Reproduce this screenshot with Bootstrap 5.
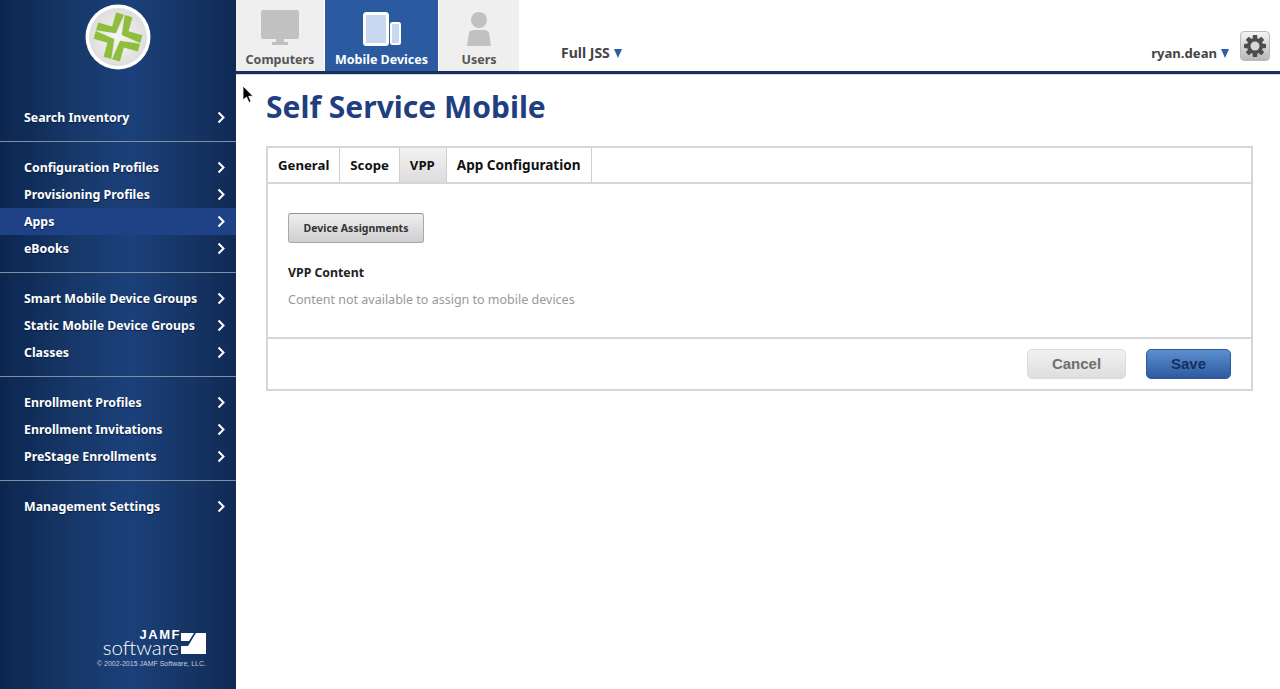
<!DOCTYPE html>
<html lang="en"><head><meta charset="utf-8"><title>Self Service Mobile</title>
<link href="https://cdn.jsdelivr.net/npm/bootstrap@5.3.0/dist/css/bootstrap.min.css" rel="stylesheet">
<style>
html,body{height:100%;overflow:hidden}
body{font-family:"Noto Sans","Open Sans",sans-serif;background:#fff;color:#222}
.shell{height:689px;position:relative}
.side{width:236px;flex:none;background:linear-gradient(90deg,#0c2650 0%,#163767 30%,#1b407a 55%,#163565 80%,#0f2a55 100%)}
.logo-wrap{height:92px;padding:4px 0 0 85px}
.logo-disc{width:66px;height:66px;display:block}
.side-group{padding:12px 0 10px;border-bottom:1px solid #7f8fa8}
.side-group.last{border-bottom:0}
.side-link{height:27px;padding:2px 11px 0 24px;color:#fff;font-weight:700;font-size:12.35px;text-decoration:none;text-shadow:0 1px 1px #0a1d3d}
.side-link:hover{color:#fff}
.side-link.on{background:#1f4286}
.chev{width:8px;height:13px;display:block;margin-top:-2px}
.side-foot{margin-top:auto;padding:0 30px 21px 0;color:#c4cfdf;text-align:right}
.brand-words{text-align:right;color:#fff;margin-right:2px}
.brand-jamf{font:700 13px/11px "Liberation Sans",sans-serif;letter-spacing:1.5px;display:block;margin-right:-2px}
.brand-soft{font:300 20.5px/14px Lato,"Liberation Sans",sans-serif;display:block}
.copy{font:400 7px/9px "Liberation Sans",sans-serif;margin:5px 0 0}
.top{height:74px;border-bottom:3px solid #1b2f5b;box-shadow:0 1px 0 #c9d6e8}
.mod{height:71px;background:#efefef;color:#555;font-weight:700;font-size:12.5px;text-decoration:none;padding-top:10px;margin-right:1px}
.mod:hover{color:#555}
.mod svg{display:block;margin-bottom:5px}
.mod.on{background:#2c5aa0;color:#fff}
.mod.on:hover{color:#fff}
.m1{width:88px}.m2{width:113px}.m3{width:80px}
.drop{font-weight:700;font-size:13.1px;color:#444;padding-top:44px;line-height:18px}
.tri{display:inline-block;width:0;height:0;border-left:4.5px solid transparent;border-right:4.5px solid transparent;border-top:9px solid #2d5fa3;margin-left:4px}
.scope{margin-left:41px;font-size:14px}
.who{margin-left:auto;margin-right:11px}
.gear{width:30px;height:30px;margin:31px 10px 0 0;background:linear-gradient(#f4f4f4,#b9b9b9);border:1px solid #bbb;border-radius:4px;align-self:flex-start;display:flex;align-items:center;justify-content:center}
.page-title{font-size:30px;font-weight:700;color:#1f3f80;margin:0;padding:15px 0 21px 30px;line-height:36px}
.panel-box{margin:0 27px 0 30px;border:2px solid #d6d6d6}
.tab-bar{height:36px;border-bottom:2px solid #d6d6d6}
.tab-item{font-weight:700;font-size:13.2px;color:#111;padding:0 10px;border-right:1px solid #cfcfcf;line-height:34px;text-decoration:none}
.tab-item:hover{color:#111}
.tab-item.on{background:linear-gradient(#f3f3f3,#dcdcdc);padding-right:11px}
.tab-item.wide{font-size:13.55px}
.panel-body{height:155px;padding:29px 20px 0;border-bottom:2px solid #d6d6d6}
.assign{width:136px;height:30px;background:linear-gradient(#eee,#cfcfcf);border:1px solid #a8a8a8;border-top-color:#8f8f8f;border-radius:3px;font-size:10.5px;font-weight:700;color:#333;padding:1px 0 0}
.sub-h{font-size:12.3px;font-weight:700;color:#222;margin:21px 0 0;line-height:18px}
.muted-line{font-size:12.5px;color:#999;margin:9px 0 0;line-height:18px}
.panel-foot{height:50px;padding:10px 20px 0 0;gap:20px}
.act{height:30px;font:700 15px/28px "Liberation Sans",sans-serif;border-radius:5px;padding:0;text-align:center}
.act-c{width:99px;background:linear-gradient(#f1f1f1,#dedede);border:1px solid #dcdcdc;color:#6f6f6f}
.act-s{width:85px;background:linear-gradient(#5d8fd0,#2c5aa0);border:1px solid #2b5a9f;color:#14315f}
.pointer{position:absolute;left:242px;top:85px;width:12px;height:19px}
</style></head><body>
<div class="shell d-flex">
<aside class="side d-flex flex-column">
<div class="logo-wrap">
<svg class="logo-disc" viewBox="0 0 66 66"><defs><radialGradient id="dg" cx="50%" cy="50%" r="50%"><stop offset="0" stop-color="#f6f6f6"/><stop offset="1" stop-color="#dedede"/></radialGradient><path id="qd" d="M.4-23H8.5V-8.5H23V-.4L3-3Z" fill="#8fbe3c"/></defs><circle cx="33" cy="33" r="32.5" fill="#fff"/><circle cx="33" cy="33" r="29" fill="url(#dg)"/><g transform="translate(33 33) rotate(16)"><use href="#qd"/><use href="#qd" transform="rotate(90)"/><use href="#qd" transform="rotate(180)"/><use href="#qd" transform="rotate(270)"/></g></svg>
</div>
<div class="side-group">
<a class="side-link d-flex align-items-center justify-content-between" href="#">Search Inventory<svg class="chev" viewBox="0 0 8 13"><path d="M1.5 1.5L6.5 6.5L1.5 11.5" fill="none" stroke="#fff" stroke-width="2"/></svg></a>
</div>
<div class="side-group">
<a class="side-link d-flex align-items-center justify-content-between" href="#">Configuration Profiles<svg class="chev" viewBox="0 0 8 13"><path d="M1.5 1.5L6.5 6.5L1.5 11.5" fill="none" stroke="#fff" stroke-width="2"/></svg></a>
<a class="side-link d-flex align-items-center justify-content-between" href="#">Provisioning Profiles<svg class="chev" viewBox="0 0 8 13"><path d="M1.5 1.5L6.5 6.5L1.5 11.5" fill="none" stroke="#fff" stroke-width="2"/></svg></a>
<a class="side-link on d-flex align-items-center justify-content-between" href="#">Apps<svg class="chev" viewBox="0 0 8 13"><path d="M1.5 1.5L6.5 6.5L1.5 11.5" fill="none" stroke="#fff" stroke-width="2"/></svg></a>
<a class="side-link d-flex align-items-center justify-content-between" href="#">eBooks<svg class="chev" viewBox="0 0 8 13"><path d="M1.5 1.5L6.5 6.5L1.5 11.5" fill="none" stroke="#fff" stroke-width="2"/></svg></a>
</div>
<div class="side-group">
<a class="side-link d-flex align-items-center justify-content-between" href="#">Smart Mobile Device Groups<svg class="chev" viewBox="0 0 8 13"><path d="M1.5 1.5L6.5 6.5L1.5 11.5" fill="none" stroke="#fff" stroke-width="2"/></svg></a>
<a class="side-link d-flex align-items-center justify-content-between" href="#">Static Mobile Device Groups<svg class="chev" viewBox="0 0 8 13"><path d="M1.5 1.5L6.5 6.5L1.5 11.5" fill="none" stroke="#fff" stroke-width="2"/></svg></a>
<a class="side-link d-flex align-items-center justify-content-between" href="#">Classes<svg class="chev" viewBox="0 0 8 13"><path d="M1.5 1.5L6.5 6.5L1.5 11.5" fill="none" stroke="#fff" stroke-width="2"/></svg></a>
</div>
<div class="side-group">
<a class="side-link d-flex align-items-center justify-content-between" href="#">Enrollment Profiles<svg class="chev" viewBox="0 0 8 13"><path d="M1.5 1.5L6.5 6.5L1.5 11.5" fill="none" stroke="#fff" stroke-width="2"/></svg></a>
<a class="side-link d-flex align-items-center justify-content-between" href="#">Enrollment Invitations<svg class="chev" viewBox="0 0 8 13"><path d="M1.5 1.5L6.5 6.5L1.5 11.5" fill="none" stroke="#fff" stroke-width="2"/></svg></a>
<a class="side-link d-flex align-items-center justify-content-between" href="#">PreStage Enrollments<svg class="chev" viewBox="0 0 8 13"><path d="M1.5 1.5L6.5 6.5L1.5 11.5" fill="none" stroke="#fff" stroke-width="2"/></svg></a>
</div>
<div class="side-group last">
<a class="side-link d-flex align-items-center justify-content-between" href="#">Management Settings<svg class="chev" viewBox="0 0 8 13"><path d="M1.5 1.5L6.5 6.5L1.5 11.5" fill="none" stroke="#fff" stroke-width="2"/></svg></a>
</div>
<div class="side-foot">
<div class="d-flex justify-content-end align-items-end">
<div class="brand-words"><span class="brand-jamf">JAMF</span><span class="brand-soft">software</span></div>
<svg width="25" height="21" viewBox="0 0 25 21"><path d="M0 0H13L8 8H0Z" fill="#fff"/><path d="M15 0H25V21H0V13H7C10 9 12 4 15 0Z" fill="#fff"/></svg>
</div>
<p class="copy">© 2002-2015 JAMF Software, LLC.</p>
</div>
</aside>
<main class="flex-grow-1">
<div class="top d-flex">
<a class="mod m1 d-flex flex-column align-items-center" href="#"><svg width="38" height="36" viewBox="0 0 38 36"><rect x="0" y="0" width="38" height="29" rx="2" fill="#c1c1c1"/><path d="M15 29H23V32H27V35H11V32H15Z" fill="#c1c1c1"/></svg>Computers</a>
<a class="mod m2 on d-flex flex-column align-items-center" href="#"><svg width="38" height="36" viewBox="0 0 38 36"><rect x="1.5" y="3.5" width="23" height="31" rx="2" fill="#c6d9f0" stroke="#fff" stroke-width="3"/><rect x="28" y="13" width="9" height="21" rx="1.5" fill="#c6d9f0" stroke="#fff" stroke-width="2"/></svg>Mobile Devices</a>
<a class="mod m3 d-flex flex-column align-items-center" href="#"><svg width="26" height="36" viewBox="0 0 26 36"><circle cx="13" cy="10" r="8" fill="#c1c1c1"/><path d="M3 23C3 21 6 20 9 20H17C20 20 23 21 23 23L25 36H1Z" fill="#c1c1c1"/></svg>Users</a>
<div class="drop scope">Full JSS<span class="tri"></span></div>
<div class="drop who">ryan.dean<span class="tri"></span></div>
<div class="gear"><svg width="24" height="24" viewBox="0 0 24 24"><g fill="#4d4d4d"><circle cx="12" cy="12" r="8"/><rect x="9.7" y="1" width="4.6" height="22" rx="1"/><rect x="9.7" y="1" width="4.6" height="22" rx="1" transform="rotate(45 12 12)"/><rect x="9.7" y="1" width="4.6" height="22" rx="1" transform="rotate(90 12 12)"/><rect x="9.7" y="1" width="4.6" height="22" rx="1" transform="rotate(135 12 12)"/></g><circle cx="12" cy="12" r="4.5" fill="#d8d8d8"/></svg></div>
</div>
<h1 class="page-title">Self Service Mobile</h1>
<section class="panel-box">
<nav class="tab-bar d-flex"><a class="tab-item" href="#">General</a><a class="tab-item" href="#">Scope</a><a class="tab-item on" href="#">VPP</a><a class="tab-item wide" href="#">App Configuration</a></nav>
<div class="panel-body">
<button class="assign d-block" type="button">Device Assignments</button>
<h2 class="sub-h">VPP Content</h2>
<p class="muted-line">Content not available to assign to mobile devices</p>
</div>
<div class="panel-foot d-flex justify-content-end align-items-start">
<button class="act act-c" type="button">Cancel</button>
<button class="act act-s" type="button">Save</button>
</div>
</section>
</main>
<svg class="pointer" viewBox="0 0 12 19"><path d="M1 1V15L4.5 12L7 17.5L9 16.5L6.7 11.3H11Z" fill="#000" stroke="#fff" stroke-width=".8"/></svg>
</div>
<script src="https://cdn.jsdelivr.net/npm/bootstrap@5.3.0/dist/js/bootstrap.bundle.min.js"></script>
</body></html>
